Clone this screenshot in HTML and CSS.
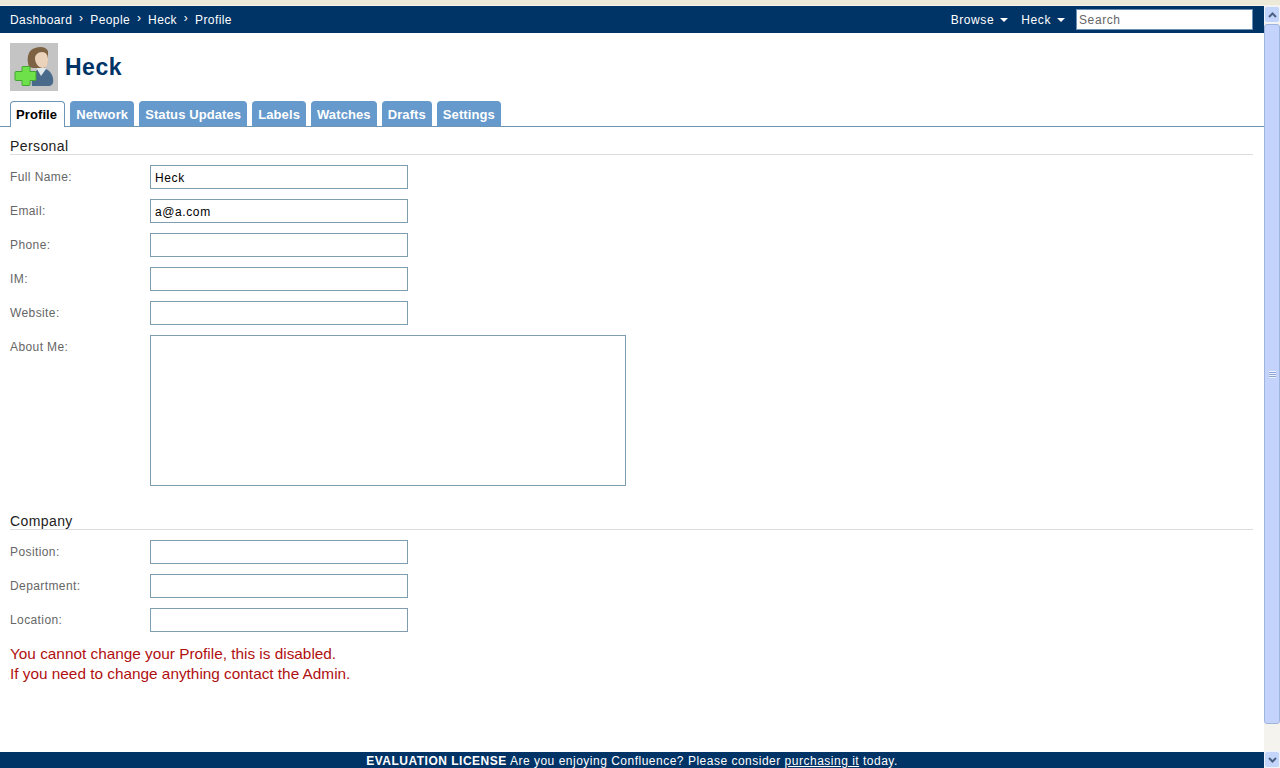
FILE: index.html
```html
<!DOCTYPE html>
<html lang="en">
    <head>
        <meta charset="UTF-8">
        <meta name="viewport" content="width=device-width, initial-scale=1.0">
        <title>Heck - Profile</title>
        <link rel="stylesheet" href="styles.css">
    </head>
    <body>
        <div class="chrome"></div>
        <div class="window">
            <div class="page">
                <div class="topbar">
                    <div class="crumbs">
                        <a href="#">Dashboard</a><span class="sep">&rsaquo;</span>
                        <a href="#">People</a><span class="sep">&rsaquo;</span>
                        <a href="#">Heck</a><span class="sep">&rsaquo;</span>
                        <a href="#">Profile</a>
                    </div>
                    <div class="menus">
                        <a href="#" class="menu">Browse<span class="caret"></span></a>
                        <a href="#" class="menu">Heck<span class="caret"></span></a>
                        <input class="search" type="text" placeholder="Search">
                    </div>
                </div>
                <div class="content">
                    <div class="title">
                        <div class="avatar">
                            <svg width="48" height="48" viewBox="0 0 48 48">
                                <path d="M22 43c-1-8 1-14 7-17h7c5 2 8 8 7 14-1 2-2 3-4 3z" fill="#4a6a8c"/>
                                <path d="M27 26l4 7 5-7-1-3h-7z" fill="#dfe8ea"/>
                                <path d="M19 24c-3-9-1-17 6-19 6-2 11-1 13 3v10l-3 7h-12z" fill="#7d6344"/>
                                <path d="M25 15c0-3 3-6 7-6s6 3 6 8c0 5-2 8-5 8-4 0-8-4-8-10z" fill="#ebd2ba"/>
                                <path d="M13 23.500h6a1 1 0 0 1 1 1v4h5a1 1 0 0 1 1 1v7a1 1 0 0 1-1 1h-5v4a1 1 0 0 1-1 1h-6a1 1 0 0 1-1-1v-4h-6a1 1 0 0 1-1-1v-7a1 1 0 0 1 1-1h6v-4a1 1 0 0 1 1-1z" fill="#6ee04a" stroke="#42a52f"/>
                            </svg>
                        </div>
                        <h1>Heck</h1>
                    </div>
                    <ul class="tabs">
                        <li class="tab active">Profile</li>
                        <li class="tab">Network</li>
                        <li class="tab">Status Updates</li>
                        <li class="tab">Labels</li>
                        <li class="tab">Watches</li>
                        <li class="tab">Drafts</li>
                        <li class="tab">Settings</li>
                    </ul>
                    <div class="form">
                        <h2>Personal</h2>
                        <div class="row"><label>Full Name:</label><input class="field" type="text" value="Heck"></div>
                        <div class="row"><label>Email:</label><input class="field" type="text" value="a@a.com"></div>
                        <div class="row"><label>Phone:</label><input class="field" type="text"></div>
                        <div class="row"><label>IM:</label><input class="field" type="text"></div>
                        <div class="row"><label>Website:</label><input class="field" type="text"></div>
                        <div class="row"><label>About Me:</label><textarea class="about"></textarea></div>
                        <h2 class="second">Company</h2>
                        <div class="row"><label>Position:</label><input class="field" type="text"></div>
                        <div class="row"><label>Department:</label><input class="field" type="text"></div>
                        <div class="row"><label>Location:</label><input class="field" type="text"></div>
                        <p class="notice">You cannot change your Profile, this is disabled.<br>If you need to change anything contact the Admin.</p>
                    </div>
                </div>
                <div class="license"><b>EVALUATION LICENSE</b> Are you enjoying Confluence? Please consider <a href="#">purchasing it</a> today.</div>
            </div>
            <div class="scrollbar">
                <div class="arrow">
                    <svg width="9" height="6" viewBox="0 0 9 6"><path d="M1 5l3.500-3.500L8 5" fill="none" stroke="#4d6185" stroke-width="2"/></svg>
                </div>
                <div class="thumb"><span class="grip"></span></div>
                <div class="track"></div>
                <div class="arrow">
                    <svg width="9" height="6" viewBox="0 0 9 6"><path d="M1 1l3.500 3.500L8 1" fill="none" stroke="#4d6185" stroke-width="2"/></svg>
                </div>
            </div>
        </div>
    </body>
</html>
```

FILE: styles.css
```css
*{
    box-sizing: border-box;
    font-family: "Liberation Sans", Arial, sans-serif;
}
html, body{
    height: 100%;
}
body{
    margin: 0;
    display: flex;
    flex-direction: column;
    overflow: hidden;
    background-color: white;
}
.chrome{
    height: 6px;
    background-color: #ece9d8;
    border-bottom: 1px solid #f6f4ea;
}
.window{
    flex: 1;
    display: flex;
    min-height: 0;
}
.page{
    flex: 1;
    display: flex;
    flex-direction: column;
    min-width: 0;
}
.topbar{
    height: 27px;
    background-color: #003366;
    display: flex;
    justify-content: space-between;
    align-items: center;
    padding: 0 11px 0 10px;
    font-size: 12px;
}
.topbar a{
    color: white;
    text-decoration: none;
}
.crumbs{
    display: flex;
    align-items: center;
    letter-spacing: 0.4px;
}
.sep{
    color: white;
    width: 18px;
    text-align: center;
    margin-top: -3px;
}
.menus{
    display: flex;
    align-items: center;
    letter-spacing: 0.6px;
}
.menu{
    display: flex;
    align-items: center;
    margin: 0 11px 0 2px;
}
.caret{
    width: 0;
    height: 0;
    margin-left: 6px;
    border-left: 4px solid transparent;
    border-right: 4px solid transparent;
    border-top: 4px solid white;
}
.search{
    width: 177px;
    height: 21px;
    padding: 0 2px;
    border: 1px solid #6a8fb5;
    font-size: 12px;
    letter-spacing: 0.6px;
    background-color: white;
}
.search::placeholder{
    color: #666;
    opacity: 1;
}
.content{
    flex: 1;
    min-height: 0;
}
.title{
    display: flex;
    align-items: center;
    padding: 10px 10px 0;
}
.avatar{
    width: 48px;
    height: 48px;
    background-color: #c4c4c4;
}
h1{
    margin: 0 0 0 7px;
    font-size: 23px;
    letter-spacing: 0.5px;
    color: #003366;
}
.tabs{
    display: flex;
    gap: 5px;
    list-style: none;
    margin: 10px 0 0;
    padding: 0 10px;
    height: 26px;
    border-bottom: 1px solid #6e96b4;
}
.tab{
    height: 25px;
    padding: 0 6px;
    line-height: 27px;
    font-size: 13px;
    font-weight: bold;
    letter-spacing: 0.1px;
    color: white;
    background-color: #6699cc;
    border-radius: 4px 4px 0 0;
}
.active{
    height: 26px;
    color: black;
    background-color: white;
    border: 1px solid #6e96b4;
    border-bottom: none;
    padding: 0 7px 0 5px;
    line-height: 25px;
}
.form{
    padding: 0 11px 0 10px;
}
h2{
    margin: 11px 0 10px;
    height: 17px;
    font-size: 14px;
    font-weight: normal;
    line-height: 16px;
    letter-spacing: 0.4px;
    color: #222;
    border-bottom: 1px solid #dddddd;
}
.second{
    margin-top: 27px;
}
.row{
    display: flex;
    align-items: flex-start;
    margin-bottom: 10px;
}
label{
    width: 140px;
    padding-top: 5px;
    font-size: 12px;
    letter-spacing: 0.4px;
    color: #666666;
}
.field{
    width: 258px;
    height: 24px;
    padding: 2px 4px 0;
    border: 1px solid #7f9db0;
    font-size: 12px;
    letter-spacing: 0.6px;
    color: black;
    background-color: white;
}
.about{
    width: 476px;
    height: 151px;
    border: 1px solid #7f9db0;
    resize: none;
    margin: 0;
    display: block;
}
.notice{
    margin: 0;
    padding-top: 2px;
    font-size: 15.35px;
    line-height: 20px;
    color: #b01010;
}
.license{
    height: 16px;
    background-color: #003366;
    color: white;
    text-align: center;
    font-size: 12px;
    line-height: 18px;
    letter-spacing: 0.5px;
}
.license a{
    color: white;
}
.scrollbar{
    width: 16px;
    display: flex;
    flex-direction: column;
    background-color: #f4f3ed;
}
.arrow{
    height: 17px;
    display: flex;
    align-items: center;
    justify-content: center;
    background-color: #c3d5fb;
    border: 1px solid #eef2fd;
    border-radius: 3px;
}
.thumb{
    height: 700px;
    margin: 1px 0;
    display: flex;
    align-items: center;
    justify-content: center;
    background-color: #c3d3fb;
    border: 1px solid #a0b4e0;
    border-radius: 3px;
}
.grip{
    width: 7px;
    height: 7px;
    background: repeating-linear-gradient(#eef3fe 0 1px, #8ca5d8 1px 2px);
}
.track{
    flex: 1;
}
```
